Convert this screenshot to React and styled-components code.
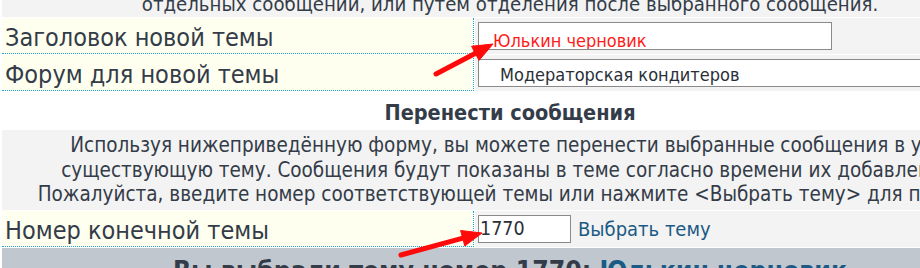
import React from "react";
import styled, { createGlobalStyle } from "styled-components";

const FONT = `"DejaVu Sans Condensed", "DejaVu Sans", "Liberation Sans", sans-serif`;

const GlobalStyle = createGlobalStyle`
  body {
    margin: 0;
    background: #ffffff;
    overflow: hidden;
    font-family: ${FONT};
    color: #333c48;
  }
`;

const Page = styled.div`
  position: relative;
  width: 920px;
  height: 268px;
  overflow: hidden;
`;

const Sheet = styled.div`
  display: grid;
  grid-template-columns: 472px 1fr;
  column-gap: 1px;
  row-gap: 1px;
  width: 1000px;
  margin-left: 2px;
`;

const Wide = styled.div`
  grid-column: 1 / -1;
  text-align: center;
  background: ${(p) => p.$bg || "#ffffff"};
`;

const NoteRow = styled(Wide)`
  height: 17px;
  overflow: hidden;
  font-size: 20.2px;
  line-height: 22px;
  white-space: nowrap;

  span {
    display: block;
    margin-top: -7px;
  }
`;

const LabelCell = styled.div`
  height: 36px;
  box-sizing: border-box;
  padding: 5px 0 0 3px;
  background: #fffff0;
  border-right: 1px dotted #1ea6d4;
  border-bottom: 1px dotted #1ea6d4;
  font-size: 25px;
  line-height: 30px;
  white-space: nowrap;
`;

const FieldCell = styled.div`
  height: 36px;
  box-sizing: border-box;
  background: #f3f3f3;
  display: flex;
  align-items: center;
  gap: 7px;
  padding-left: 3px;
`;

const Field = styled.div`
  box-sizing: border-box;
  width: ${(p) => p.$w}px;
  height: 28px;
  background: #ffffff;
  border: 1px solid #8a8a8a;
  overflow: hidden;
  white-space: nowrap;
  color: ${(p) => p.$color || "#2a2f38"};
  font-size: ${(p) => p.$size || 17}px;
  line-height: 20px;
  padding: ${(p) => p.$pad || "0"};
`;

const PickLink = styled.a`
  color: #1b5a84;
  text-decoration: none;
  font-size: 20px;
  white-space: nowrap;
`;

const SectionTitle = styled(Wide)`
  height: 37px;
  box-sizing: border-box;
  padding-top: 8px;
  font-weight: bold;
  font-size: 21.5px;
  line-height: 26px;
`;

const Description = styled(Wide)`
  height: 80px;
  box-sizing: border-box;
  padding-top: 3px;
  font-size: 20.5px;
  line-height: 24.7px;
  white-space: nowrap;
`;

const ResultBar = styled(Wide)`
  height: 40px;
  box-sizing: border-box;
  padding-top: 8px;
  font-weight: bold;
  font-size: 26.4px;
  line-height: 30px;
  white-space: nowrap;

  a {
    color: #1b5a84;
    text-decoration: none;
  }
`;

const Marks = styled.svg`
  position: absolute;
  left: 0;
  top: 0;
  pointer-events: none;
`;

const Arrow = ({ x1, y1, x2, y2 }) => {
  const dx = x2 - x1;
  const dy = y2 - y1;
  const len = Math.hypot(dx, dy);
  const ux = dx / len;
  const uy = dy / len;
  const bx = x2 - ux * 20;
  const by = y2 - uy * 20;
  const px = -uy * 8;
  const py = ux * 8;
  return (
    <g fill="#ff0a0a" stroke="#ff0a0a">
      <line x1={x1} y1={y1} x2={bx + ux * 4} y2={by + uy * 4} strokeWidth="5" strokeLinecap="round" />
      <polygon points={`${x2},${y2} ${bx + px},${by + py} ${bx - px},${by - py}`} strokeWidth="1" strokeLinejoin="round" />
    </g>
  );
};

export default function App() {
  return (
    <Page>
      <GlobalStyle />
      <Sheet>
        <NoteRow $bg="#f3f3f3">
          <span>отдельных сообщений, или путем отделения после выбранного сообщения.</span>
        </NoteRow>

        <LabelCell>Заголовок новой темы</LabelCell>
        <FieldCell>
          <Field $w={354} $color="#ff1a1a" $size={18} $pad="8px 0 0 14px">
            Юлькин черновик
          </Field>
        </FieldCell>

        <LabelCell>Форум для новой темы</LabelCell>
        <FieldCell>
          <Field $w={540} $size={18} $pad="5px 0 0 21px">
            Модераторская кондитеров
          </Field>
        </FieldCell>

        <SectionTitle>Перенести сообщения</SectionTitle>

        <Description $bg="#f3f3f3">
          Используя нижеприведённую форму, вы можете перенести выбранные сообщения в уже
          <br />
          существующую тему. Сообщения будут показаны в теме согласно времени их добавления.
          <br />
          Пожалуйста, введите номер соответствующей темы или нажмите &lt;Выбрать тему&gt; для поиска.
        </Description>

        <LabelCell>Номер конечной темы</LabelCell>
        <FieldCell>
          <Field $w={93} $size={19.5} $pad="3px 0 0 1px">
            1770
          </Field>
          <PickLink href="#">Выбрать тему</PickLink>
        </FieldCell>

        <ResultBar $bg="#c1c7ce">
          Вы выбрали тему номер 1770: <a href="#">Юлькин черновик</a>
        </ResultBar>
      </Sheet>

      <Marks width="920" height="268">
        <Arrow x1={436} y1={74} x2={493} y2={44} />
        <Arrow x1={401} y1={255} x2={482} y2={233} />
      </Marks>
    </Page>
  );
}
